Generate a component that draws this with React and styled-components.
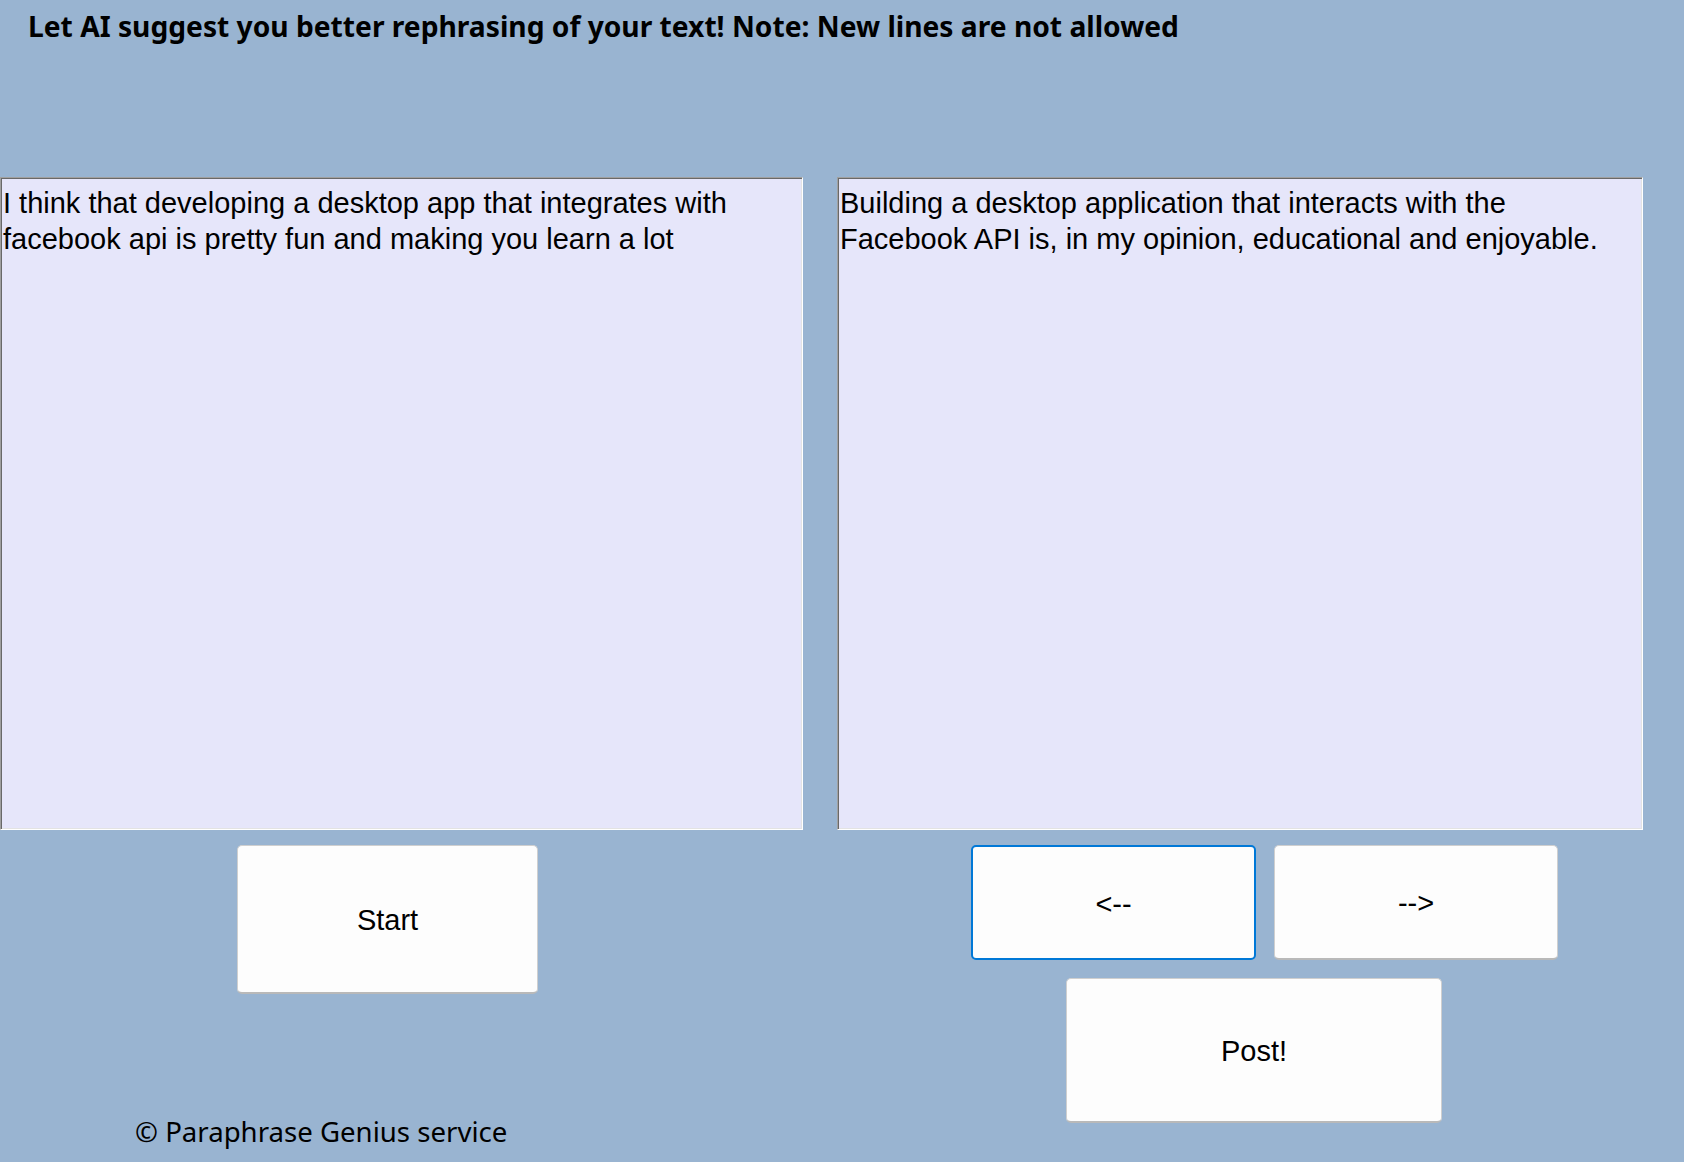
import React from 'react';
import styled, { createGlobalStyle } from 'styled-components';

const GlobalStyle = createGlobalStyle`
  html, body {
    margin: 0;
    padding: 0;
    background: #99b4d1;
  }
`;

const Window = styled.div`
  width: 1684px;
  height: 1162px;
  background: #99b4d1;
  overflow: hidden;
  color: #000;
`;

const Header = styled.div`
  height: 177px;
  box-sizing: border-box;
  padding: 8px 0 0 28px;
`;

const Title = styled.h1`
  margin: 0;
  font-family: "Noto Sans", "Open Sans", sans-serif;
  font-weight: 700;
  font-size: 28.2px;
  line-height: 36px;
  white-space: nowrap;
`;

const Columns = styled.div`
  display: grid;
  grid-template-columns: 803px 806px;
  column-gap: 34px;
`;

const Column = styled.div`
  display: flex;
  flex-direction: column;
  align-items: flex-start;
`;

const TextBox = styled.textarea`
  box-sizing: border-box;
  width: 100%;
  height: 653px;
  margin: 0;
  padding: 8px 2px 5px;
  background: #e6e6fa;
  border-style: solid;
  border-width: 1px;
  border-color: #a0a0a0 #ffffff #ffffff #a0a0a0;
  box-shadow: inset 1px 1px 0 #696969, inset -1px -1px 0 #e3e3e3;
  font-family: "Liberation Sans", Arial, sans-serif;
  font-size: 29px;
  line-height: 35.5px;
  color: #000;
  resize: none;
  overflow: hidden;
  outline: none;
`;

const Button = styled.button`
  box-sizing: border-box;
  width: ${p => p.w}px;
  height: ${p => p.h}px;
  margin: 0;
  padding: 3px 0 0;
  background: #fdfdfd;
  border: ${p => (p.focused ? '2px solid #0078d7' : '1px solid #cfcfcf')};
  border-bottom-color: ${p => (p.focused ? '#0078d7' : '#b9b9b9')};
  border-bottom-width: 2px;
  border-radius: 5px;
  font-family: "Liberation Sans", Arial, sans-serif;
  font-size: 29px;
  color: #000;
  cursor: pointer;
  outline: none;
`;

const StartWrap = styled.div`
  margin: 15px 0 0 237px;
`;

const ArrowRow = styled.div`
  display: flex;
  gap: 18px;
  margin: 15px 0 0 134px;
`;

const PostWrap = styled.div`
  margin: 18px 0 0 229px;
`;

const Footer = styled.div`
  margin: 119px 0 0 135px;
  font-family: "Noto Sans", "Open Sans", sans-serif;
  font-size: 27.6px;
  line-height: 36px;
  white-space: nowrap;
  color: #000;
`;

export default function App() {
  return (
    <Window>
      <GlobalStyle />
      <Header>
        <Title>Let AI suggest you better rephrasing of your text! Note: New lines are not allowed</Title>
      </Header>
      <Columns>
        <Column>
          <TextBox
            spellCheck={false}
            defaultValue="I think that developing a desktop app that integrates with facebook api is pretty fun and making you learn a lot"
          />
          <StartWrap>
            <Button w={301} h={149}>Start</Button>
          </StartWrap>
          <Footer>© Paraphrase Genius service</Footer>
        </Column>
        <Column>
          <TextBox
            spellCheck={false}
            defaultValue="Building a desktop application that interacts with the Facebook API is, in my opinion, educational and enjoyable."
          />
          <ArrowRow>
            <Button w={285} h={115} focused>{'<--'}</Button>
            <Button w={284} h={115}>{'-->'}</Button>
          </ArrowRow>
          <PostWrap>
            <Button w={376} h={145}>Post!</Button>
          </PostWrap>
        </Column>
      </Columns>
    </Window>
  );
}
